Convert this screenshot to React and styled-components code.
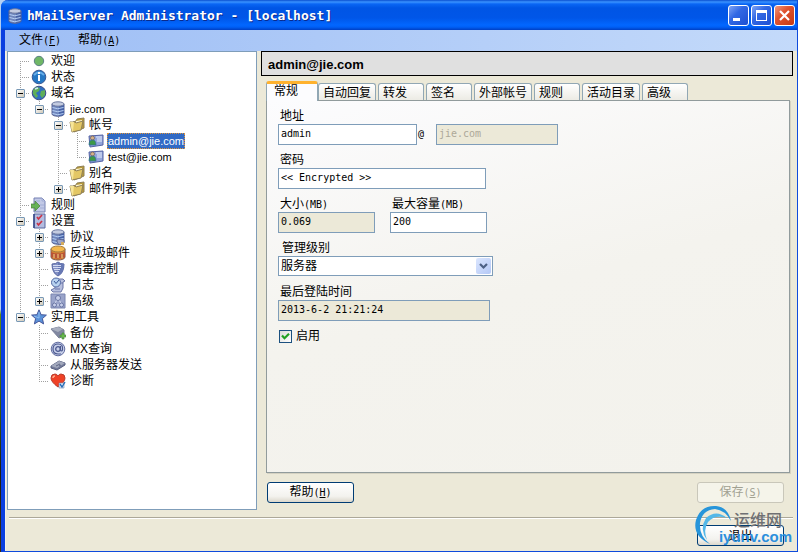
import React, { useState } from "react";
import styled, { createGlobalStyle } from "styled-components";

const GlobalStyle = createGlobalStyle`
  *, *::before, *::after {
    box-sizing: border-box;
  }
  body {
    margin: 0;
    font-family: "Liberation Sans", "Noto Sans CJK SC", sans-serif;
    font-size: 12px;
    color: #000;
  }
  button, input, select {
    margin: 0;
    color: inherit;
    font: inherit;
  }
`;

const Desktop = styled.div`
  min-height: 100vh;
  padding-left: 1px;
  display: flex;
  background: linear-gradient(
    #b4d0f4 0%,
    #86aee8 45%,
    #b4d0f4 56%,
    #5f8a10 57%,
    #38540c 75%,
    #1c1c10 85%,
    #3a2c14 100%
  );
`;

const Window = styled.div`
  flex: 1;
  min-width: 0;
  display: flex;
  flex-direction: column;
  background: #ece9d8;
  border-left: 4px solid #0a3fe0;
  border-right: 1px solid #0f4bdc;
  border-bottom: 1px solid #0f4bdc;
  border-top-left-radius: 7px;
  box-shadow: inset 1px 0 0 #f3f1e6;
`;

const TitleBar = styled.header`
  height: 30px;
  margin-left: -4px;
  padding: 1px 2px 0 6px;
  display: flex;
  align-items: center;
  gap: 4px;
  color: #fff;
  border-radius: 7px 0 0 0;
  background: linear-gradient(
    #0a4fd0 0,
    #3a93ff 2px,
    #0a66f4 4px,
    #0055e5 8px,
    #0056e8 18px,
    #0267ff 25px,
    #0060f6 27px,
    #003fc4 30px
  );
`;

const Title = styled.h1`
  flex: 1;
  margin: 0;
  font: bold 13px/16px "DejaVu Sans Mono", monospace;
  text-shadow: 1px 1px 0 #0a2a8c;
  white-space: nowrap;
`;

const WindowButtons = styled.div`
  display: flex;
  gap: 2px;
`;

const WindowButton = styled.button`
  width: 21px;
  height: 21px;
  padding: 0;
  display: grid;
  place-items: center;
  border: 1px solid #fff;
  border-radius: 3px;
  background: ${(p) =>
    p.$close
      ? "linear-gradient(135deg, #f0977c, #e0532f 40%, #c63a14)"
      : "linear-gradient(135deg, #7fa4f5, #3268e4 40%, #1d4fd2)"};
`;

const MenuBar = styled.nav`
  height: 21px;
  padding: 0 14px;
  display: flex;
  align-items: center;
  gap: 17px;
  background: linear-gradient(90deg, #9ebef5, #c4dafa);
`;

const MenuItem = styled.button`
  padding: 0;
  border: 0;
  background: none;
  line-height: 18px;
`;

const Latin = styled.span`
  font-family: "DejaVu Sans Mono", monospace;
  font-size: 10px;
`;

const Main = styled.main`
  flex: 1;
  padding: 0 4px 0 2px;
  display: flex;
  gap: 4px;
`;

const TreePane = styled.nav`
  flex: 0 0 250px;
  padding: 1px 3px;
  border: 1px solid #7f9db9;
  background: #fff;
`;

const TreeRow = styled.div`
  height: 16px;
  display: flex;
  align-items: center;
`;

const Guide = styled.span`
  position: relative;
  flex: 0 0 19px;
  height: 16px;
  display: grid;
  place-items: center;

  &::before {
    content: "";
    position: absolute;
    left: 9px;
    top: ${(p) => (p.$from ? "8px" : "0")};
    bottom: ${(p) => (p.$end ? "8px" : "0")};
    width: 1px;
    background: ${(p) =>
      p.$line
        ? "repeating-linear-gradient(#a0a0a0 0 1px, transparent 1px 2px)"
        : "none"};
  }

  &::after {
    content: "";
    position: absolute;
    left: 9px;
    right: 0;
    top: 8px;
    height: 1px;
    background: ${(p) =>
      p.$branch
        ? "repeating-linear-gradient(90deg, #a0a0a0 0 1px, transparent 1px 2px)"
        : "none"};
  }
`;

const Expander = styled.button`
  position: relative;
  z-index: 1;
  width: 9px;
  height: 9px;
  padding: 0;
  display: block;
  border: 1px solid #7898b5;
  border-radius: 1px;
  background: linear-gradient(135deg, #fff, #cfc8b8);

  svg {
    display: block;
  }
`;

const IconCell = styled.span`
  flex: 0 0 19px;
  display: flex;
  padding-left: 1px;
`;

const TreeLabel = styled.button`
  height: 16px;
  margin-left: 1px;
  padding: 0 1px;
  border: 0;
  background: ${(p) => (p.$selected ? "#316ac5" : "none")};
  color: ${(p) => (p.$selected ? "#fff" : "#000")};
  outline: ${(p) => (p.$selected ? "1px dotted #e0953a" : "none")};
  outline-offset: -1px;
  font-size: ${(p) => (p.$latin ? "11px" : "12px")};
  line-height: 16px;
  white-space: nowrap;
`;

const Content = styled.section`
  flex: 1;
  min-width: 0;
  display: flex;
  flex-direction: column;
`;

const Heading = styled.h2`
  height: 25px;
  margin: 0 0 5px;
  padding: 2px 6px 0;
  border: 1px solid #000;
  background: #e0e0e0;
  font-size: 13px;
  line-height: 22px;
`;

const TabList = styled.div`
  height: 19px;
  margin-left: 5px;
  display: flex;
  align-items: flex-end;
  gap: 2px;
`;

const Tab = styled.button`
  height: 17px;
  min-width: 46px;
  padding: 0 4px;
  border: 1px solid #91a7b4;
  border-bottom: 0;
  border-radius: 3px 3px 0 0;
  background: linear-gradient(#fff, #ecebe4);
  line-height: 18px;
  text-align: left;
  white-space: nowrap;

  &[aria-selected="true"] {
    z-index: 1;
    height: 20px;
    min-width: 52px;
    margin: 0 -2px -1px 0;
    padding: 0 7px 2px;
    border-top: 3px solid #ffb22e;
    background: #fcfcfe;
    line-height: 15px;
  }
`;

const TabPanel = styled.div`
  flex: 1;
  margin: 0 3px 0 5px;
  padding: 7px 11px;
  border: 1px solid #919b9c;
  background: linear-gradient(165deg, #fcfcfe, #f4f3ee 50%, #f3f2ec);
  box-shadow: 1px 1px 0 #d5d2c2;
`;

const Form = styled.form`
  display: flex;
  flex-direction: column;
  gap: 7px;
`;

const FieldRow = styled.div`
  display: flex;
  align-items: flex-end;
  gap: ${(p) => p.$gap || 0}px;
`;

const Field = styled.div`
  flex: 0 1 ${(p) => p.$width}px;
  min-width: 0;
  display: flex;
  flex-direction: column;
`;

const Label = styled.label`
  height: 16px;
  padding-left: ${(p) => (p.$indent ? 4 : 2)}px;
  line-height: 16px;
  white-space: nowrap;
`;

const TextInput = styled.input`
  width: 100%;
  height: 21px;
  padding: 0 2px 2px;
  border: 1px solid #7f9db9;
  border-radius: 0;
  background: #fff;
  font-family: "DejaVu Sans Mono", "Noto Sans CJK SC", monospace;
  font-size: 10px;

  &:read-only {
    background: #ece9d8;
  }
  &:disabled {
    background: #ece9d8;
    color: #aca899;
  }
`;

const At = styled.span`
  width: 19px;
  height: 21px;
  padding-left: 1px;
  font-family: "DejaVu Sans Mono", monospace;
  font-size: 10px;
  line-height: 19px;
`;

const SelectBox = styled.div`
  position: relative;
  height: 21px;
`;

const Select = styled.select`
  width: 100%;
  height: 20px;
  padding: 0 20px 0 2px;
  appearance: none;
  border: 1px solid #7f9db9;
  border-radius: 0;
  background: #fff;
`;

const SelectArrow = styled.span`
  position: absolute;
  top: 2px;
  right: 2px;
  width: 15px;
  height: 16px;
  display: grid;
  place-items: center;
  border-radius: 2px;
  background: linear-gradient(135deg, #dbe6fe, #b4c8f6);
  pointer-events: none;
`;

const CheckRow = styled.label`
  height: 16px;
  padding-left: 1px;
  display: flex;
  align-items: center;
  gap: 4px;
  line-height: 16px;
`;

const CheckBox = styled.input`
  width: 13px;
  height: 13px;
  appearance: none;
  border: 1px solid #1c5180;
  background: linear-gradient(135deg, #dcdcd7, #fff);

  &:checked {
    background: url("data:image/svg+xml,%3Csvg xmlns='http://www.w3.org/2000/svg' viewBox='0 0 11 11'%3E%3Cpath d='M2 4.5l2.5 2.7L9 2.8' fill='none' stroke='%2321a121' stroke-width='2.2'/%3E%3C/svg%3E"),
      linear-gradient(135deg, #dcdcd7, #fff);
  }
`;

const Actions = styled.div`
  padding: 9px 9px 7px 6px;
  display: flex;
  justify-content: space-between;
`;

const Button = styled.button`
  width: 87px;
  height: 21px;
  padding: 0;
  border: 1px solid #003c74;
  border-radius: 3px;
  background: linear-gradient(#fff, #f3f2ee 70%, #dcd8cc);
  line-height: 18px;

  &:disabled {
    border-color: #c9c7ba;
    background: #f5f4ea;
    color: #a1a192;
  }
`;

const Footer = styled.footer`
  position: relative;
  margin: 7px 4px 0;
  padding: 7px 9px 5px;
  display: flex;
  justify-content: flex-end;
  border-top: 1px solid #aca899;
  box-shadow: inset 0 1px 0 #fff;
`;

const Watermark = styled.div`
  position: absolute;
  right: 1px;
  bottom: 6px;
  display: flex;
  align-items: flex-end;
  pointer-events: none;

  > svg {
    margin-right: -14px;
  }
`;

const WatermarkText = styled.div`
  display: flex;
  flex-direction: column;
  align-items: flex-end;
`;

const WatermarkName = styled.span`
  padding-right: 10px;
  color: #6f7073;
  font-size: 16px;
  font-weight: 500;
  line-height: 16px;
`;

const WatermarkUrl = styled.span`
  color: #2b8fdd;
  font-size: 15px;
  font-weight: bold;
  line-height: 16px;
`;

const Drum = () => (
  <>
    <path d="M2 3v10c0 3 12 3 12 0V3z" fill="#6f86bd" stroke="#5a6594" />
    <path d="M9 4v11c3 0 5-1 5-2V3z" fill="#4762a6" />
    <ellipse cx="8" cy="3" rx="6" ry="2.2" fill="#c3cbe0" stroke="#6b789f" />
    <path d="M2.5 6.5q5 2.5 11 0M2.5 9.5q5 2.5 11 0M2.5 12.5q5 2.5 11 0" fill="none" stroke="#b7d0f4" />
  </>
);

const drawings = {
  dot: <circle cx="8" cy="8" r="4.7" fill="#6fb766" stroke="#5b7f84" />,
  info: (
    <>
      <circle cx="8" cy="8" r="6.8" fill="#2678c4" stroke="#3b5a94" />
      <path d="M3 6q5-5 10 0" fill="none" stroke="#67aee8" strokeWidth="2" />
      <path d="M7 3h2v2H7zM7 6h2v6H7z" fill="#fff" />
    </>
  ),
  globe: (
    <>
      <circle cx="8" cy="8" r="6.8" fill="#2f6fc0" stroke="#3d4d86" />
      <path d="M5 2l4 1-1 3-3 2 2 3-2 2-3-4V5zM10 6l4-1v5l-3 3-2-3z" fill="#5fae58" />
      <path d="M4 4l3-1" stroke="#cfe6f7" strokeWidth="1.5" />
    </>
  ),
  server: <Drum />,
  folder: (
    <>
      <path d="M4 5l3-1 1-2 7-1v10l-10 4z" fill="#b99a38" stroke="#8f8057" />
      <path d="M7 4l6-1v8l-7 2z" fill="#fff8d0" />
      <path d="M1 5h5l1 1 7-2-2 9-9 2z" fill="#e3c765" stroke="#8f8057" />
      <path d="M1 5h4l-1 9-1 1z" fill="#f7e598" />
    </>
  ),
  account: (
    <>
      <path d="M1 3l14-1v10L2 14z" fill="#92a4da" stroke="#5361a3" />
      <path d="M8 4h6M9 6h5M9 8h5" stroke="#e7eefc" />
      <circle cx="4.5" cy="5" r="2" fill="#d8b38b" stroke="#69533c" strokeWidth=".6" />
      <path d="M1 12q0-5 3.500-5T8 12z" fill="#3d9946" stroke="#3068a4" strokeWidth=".7" />
    </>
  ),
  rule: (
    <>
      <path d="M3 1h8l3 3v11H3z" fill="#c2c9e6" stroke="#7480b2" />
      <path d="M11 1v3h3M5 4h4M9 8h4M9 11h4" fill="none" stroke="#a3aed6" />
      <path d="M0 7h4V4l5 5-5 5v-3H0z" fill="#67b357" stroke="#48803d" strokeWidth=".7" />
    </>
  ),
  settings: (
    <>
      <path d="M3 1h11v14H3z" fill="#b4bde0" stroke="#58679e" />
      <path d="M3 1v14" stroke="#354684" strokeWidth="1.5" />
      <path d="M6 4l1.500 2L11 2M6 10l1.500 2L11 8" fill="none" stroke="#cb3446" strokeWidth="1.7" />
    </>
  ),
  protocol: (
    <>
      <Drum />
      <path d="M7 10l7 1v3l-5 2-2-3z" fill="#9da5c6" stroke="#5e6995" />
      <path d="M11 13h3v3h-3z" fill="#d3aa5d" />
    </>
  ),
  spam: (
    <>
      <path d="M1 4v8c0 4 14 4 14 0V4z" fill="#d98532" stroke="#7f5850" />
      <ellipse cx="8" cy="4" rx="7" ry="3" fill="#f4b84d" stroke="#a47c42" />
      <path d="M1 7q7 3 14 0v5q-7 3-14 0z" fill="#b85437" />
      <path d="M3 10h2M7 10h2M11 10h2M3 12h2M7 12h2M11 12h2" stroke="#f7dc83" />
    </>
  ),
  shield: (
    <>
      <path d="M2 3q4 0 6-2 2 2 6 2 0 9-6 12-6-3-6-12z" fill="#8290c4" stroke="#5966a0" />
      <path d="M8 1q2 2 6 2 0 9-6 12z" fill="#6778b4" />
      <path d="M3 4.5h8M3 6.5h8M4 8.5h6M5 10.5h4" stroke="#d3daf2" />
    </>
  ),
  log: (
    <>
      <path d="M5 2h8l2 2-2 1v6l-2 4H3l-2-2 4-2z" fill="#b7bfde" stroke="#6a75a6" />
      <circle cx="6" cy="5.5" r="4.5" fill="#b8d2ef" stroke="#5368a2" />
      <path d="M4 4l2 2.500L9 3" fill="none" stroke="#385696" />
      <path d="M5 12h5M11 6h2" stroke="#6874a8" />
    </>
  ),
  advanced: (
    <>
      <path d="M1 1h14v14H1z" fill="#9aa4ca" stroke="#7a85b0" />
      <path d="M8 5l-4 7h8z" fill="none" stroke="#dde3f5" />
      <circle cx="8" cy="5" r="2.5" fill="#c8d0ea" stroke="#6874a2" />
      <circle cx="4.5" cy="12" r="2" fill="#c8d0ea" stroke="#6874a2" />
      <circle cx="11.5" cy="12" r="2" fill="#c8d0ea" stroke="#6874a2" />
    </>
  ),
  star: (
    <>
      <path d="M8 .8l2.100 4.900 5.300.4-4 3.500 1.200 5.300L8 12.100 3.400 14.900l1.200-5.300-4-3.500 5.300-.4z" fill="#5a91d8" stroke="#44569a" />
      <path d="M8 3v6L3 7" fill="none" stroke="#91bdf0" />
    </>
  ),
  backup: (
    <>
      <path d="M1 4l8-2 5 3v6l-5 2z" fill="#8087a0" stroke="#767d96" />
      <path d="M1 4l7-2 5 2-5 3z" fill="#a9afbf" />
      <path d="M10 10h2V8h2v2h2v2h-2v2h-2v-2h-2z" fill="#69b94d" stroke="#41803a" strokeWidth=".6" />
    </>
  ),
  mx: (
    <>
      <circle cx="8" cy="8" r="6.8" fill="#c7cfe9" stroke="#626da0" />
      <circle cx="8" cy="8" r="2.3" fill="none" stroke="#4b588f" strokeWidth="1.3" />
      <path d="M10.500 5v4q1 2 2 0Q13.500 3 8 3 3 3 3 8t5 5h3" fill="none" stroke="#4b588f" strokeWidth="1.2" />
    </>
  ),
  send: (
    <>
      <path d="M1 9l8-5 6 2v2l-8 5-6-2z" fill="#737b99" stroke="#596080" />
      <path d="M1 9l8-5 6 2-8 5z" fill="#a3a9bd" />
      <path d="M6 9l4-2M9 9l2-1" stroke="#5e6685" />
    </>
  ),
  heart: (
    <>
      <path d="M8 14Q1 9 1 5q0-4 4-4 2 0 3 2 1-2 3-2 4 0 4 4 0 4-7 9z" fill="#ef4126" stroke="#b83c2d" />
      <path d="M3 5q0-2 2-2" fill="none" stroke="#ffad8e" strokeWidth="1.5" />
      <path d="M9 10h5v5H9z" fill="#e6edf7" stroke="#6e86b0" strokeWidth=".6" />
      <path d="M10 11l2 3 3-5" fill="none" stroke="#286db7" strokeWidth="1.4" />
    </>
  ),
};

const Icon = ({ name }) => (
  <svg width="16" height="16" viewBox="0 0 16 16" aria-hidden="true">
    {drawings[name]}
  </svg>
);

const tree = [
  { label: "欢迎", icon: "dot" },
  { label: "状态", icon: "info" },
  {
    label: "域名",
    icon: "globe",
    children: [
      {
        label: "jie.com",
        icon: "server",
        children: [
          {
            label: "帐号",
            icon: "folder",
            children: [
              { label: "admin@jie.com", icon: "account" },
              { label: "test@jie.com", icon: "account" },
            ],
          },
          { label: "别名", icon: "folder" },
          {
            label: "邮件列表",
            icon: "folder",
            closed: true,
            children: [],
          },
        ],
      },
    ],
  },
  { label: "规则", icon: "rule" },
  {
    label: "设置",
    icon: "settings",
    children: [
      { label: "协议", icon: "protocol", closed: true, children: [] },
      { label: "反垃圾邮件", icon: "spam", closed: true, children: [] },
      { label: "病毒控制", icon: "shield" },
      { label: "日志", icon: "log" },
      { label: "高级", icon: "advanced", closed: true, children: [] },
    ],
  },
  {
    label: "实用工具",
    icon: "star",
    children: [
      { label: "备份", icon: "backup" },
      { label: "MX查询", icon: "mx" },
      { label: "从服务器发送", icon: "send" },
      { label: "诊断", icon: "heart" },
    ],
  },
];

const TreeNode = ({ node, lines, first, last, selected, onSelect }) => {
  const [open, setOpen] = useState(!node.closed);

  return (
    <>
      <TreeRow>
        {lines.map((line, i) => (
          <Guide key={i} $line={line} />
        ))}
        <Guide $line $branch $from={first} $end={last}>
          {node.children && (
            <Expander
              aria-label={node.label}
              aria-expanded={open}
              onClick={() => setOpen(!open)}
            >
              <svg width="7" height="7" viewBox="0 0 7 7">
                <path d={open ? "M1 3h5v1H1z" : "M1 3h5v1H1zM3 1h1v5H3z"} />
              </svg>
            </Expander>
          )}
        </Guide>
        <IconCell>
          <Icon name={node.icon} />
        </IconCell>
        <TreeLabel
          $selected={selected === node.label}
          $latin={node.label.includes(".com")}
          onClick={() => onSelect(node.label)}
        >
          {node.label}
        </TreeLabel>
      </TreeRow>
      {open &&
        node.children &&
        node.children.map((child, i) => (
          <TreeNode
            key={child.label}
            node={child}
            lines={[...lines, !last]}
            last={i === node.children.length - 1}
            selected={selected}
            onSelect={onSelect}
          />
        ))}
    </>
  );
};

const tabs = ["常规", "自动回复", "转发", "签名", "外部帐号", "规则", "活动目录", "高级"];

const Key = ({ letter }) => (
  <Latin>
    (<u>{letter}</u>)
  </Latin>
);

const AccountForm = () => (
  <Form>
    <FieldRow>
      <Field $width={139}>
        <Label htmlFor="address">地址</Label>
        <TextInput id="address" defaultValue="admin" />
      </Field>
      <At>@</At>
      <Field $width={122}>
        <TextInput aria-label="域名" defaultValue="jie.com" disabled />
      </Field>
    </FieldRow>
    <FieldRow>
      <Field $width={208}>
        <Label htmlFor="password">密码</Label>
        <TextInput id="password" defaultValue="<< Encrypted >>" />
      </Field>
    </FieldRow>
    <FieldRow $gap={15}>
      <Field $width={97}>
        <Label htmlFor="size">
          大小<Latin>(MB)</Latin>
        </Label>
        <TextInput id="size" value="0.069" readOnly />
      </Field>
      <Field $width={97}>
        <Label htmlFor="max-size">
          最大容量<Latin>(MB)</Latin>
        </Label>
        <TextInput id="max-size" defaultValue="200" />
      </Field>
    </FieldRow>
    <FieldRow>
      <Field $width={215}>
        <Label htmlFor="level" $indent>
          管理级别
        </Label>
        <SelectBox>
          <Select id="level" defaultValue="服务器">
            <option>用户</option>
            <option>域名</option>
            <option>服务器</option>
          </Select>
          <SelectArrow>
            <svg width="9" height="7" viewBox="0 0 9 7">
              <path d="M1 1l3.500 3.500L8 1" fill="none" stroke="#4d6185" strokeWidth="2.2" />
            </svg>
          </SelectArrow>
        </SelectBox>
      </Field>
    </FieldRow>
    <FieldRow>
      <Field $width={212}>
        <Label htmlFor="last-login">最后登陆时间</Label>
        <TextInput id="last-login" value="2013-6-2 21:21:24" readOnly />
      </Field>
    </FieldRow>
    <CheckRow>
      <CheckBox type="checkbox" defaultChecked />
      启用
    </CheckRow>
  </Form>
);

const App = () => {
  const [selected, setSelected] = useState("admin@jie.com");
  const [tab, setTab] = useState("常规");

  return (
    <Desktop>
      <GlobalStyle />
      <Window>
        <TitleBar>
          <Icon name="server" />
          <Title>hMailServer Administrator - [localhost]</Title>
          <WindowButtons>
            <WindowButton aria-label="最小化">
              <svg width="19" height="19" viewBox="0 0 19 19">
                <path d="M4 12h7v3H4z" fill="#fff" />
              </svg>
            </WindowButton>
            <WindowButton aria-label="最大化">
              <svg width="19" height="19" viewBox="0 0 19 19">
                <path d="M4 4h11v11H4zM5 7v7h9V7z" fill="#fff" fillRule="evenodd" />
              </svg>
            </WindowButton>
            <WindowButton aria-label="关闭" $close>
              <svg width="19" height="19" viewBox="0 0 19 19">
                <path d="M5 5l9 9M14 5l-9 9" stroke="#fff" strokeWidth="2.2" />
              </svg>
            </WindowButton>
          </WindowButtons>
        </TitleBar>
        <MenuBar>
          <MenuItem>
            文件
            <Key letter="F" />
          </MenuItem>
          <MenuItem>
            帮助
            <Key letter="A" />
          </MenuItem>
        </MenuBar>
        <Main>
          <TreePane>
            {tree.map((node, i) => (
              <TreeNode
                key={node.label}
                node={node}
                lines={[]}
                first={i === 0}
                last={i === tree.length - 1}
                selected={selected}
                onSelect={setSelected}
              />
            ))}
          </TreePane>
          <Content>
            <Heading>{selected}</Heading>
            <TabList role="tablist">
              {tabs.map((name) => (
                <Tab
                  key={name}
                  role="tab"
                  aria-selected={tab === name}
                  onClick={() => setTab(name)}
                >
                  {name}
                </Tab>
              ))}
            </TabList>
            <TabPanel role="tabpanel">
              <AccountForm />
            </TabPanel>
            <Actions>
              <Button>
                帮助
                <Key letter="H" />
              </Button>
              <Button disabled>
                保存
                <Key letter="S" />
              </Button>
            </Actions>
          </Content>
        </Main>
        <Footer>
          <Button>退出</Button>
          <Watermark>
            <svg width="38" height="40" viewBox="0 0 38 40">
              <path d="M15 39Q-3 31 1 15 6 0 21 1 33 2 36 16 30 5 20 4 7 5 5 18 4 31 15 39z" fill="#2795da" />
              <path d="M12 35Q4 24 11 13q10-9 21 0Q20 9 13 17q-5 8-1 18z" fill="#52b7e8" />
            </svg>
            <WatermarkText>
              <WatermarkName>运维网</WatermarkName>
              <WatermarkUrl>iyunv.com</WatermarkUrl>
            </WatermarkText>
          </Watermark>
        </Footer>
      </Window>
    </Desktop>
  );
};

export default App;
